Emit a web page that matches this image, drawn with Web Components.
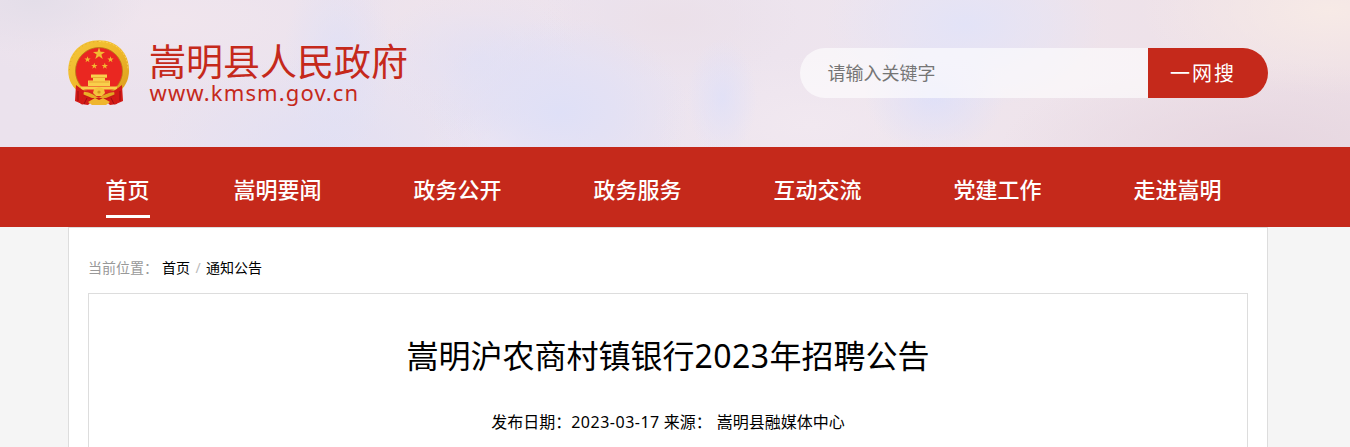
<!DOCTYPE html>
<html lang="zh-CN">
<head>
<meta charset="utf-8">
<title>嵩明沪农商村镇银行2023年招聘公告</title>
<style>
html,body{margin:0;height:447px;overflow:hidden;background:#f5f5f5}
body{font-family:"Noto Sans","Noto Sans CJK SC",sans-serif;color:#000}
</style>
</head>
<body>
<gov-page></gov-page>
<script>
const define=(name,html)=>customElements.define(name,class extends HTMLElement{
  constructor(){super();this.attachShadow({mode:'open'}).innerHTML=html;}
});

define('gov-emblem',`<style>:host{display:block;width:62px;height:66px}svg{display:block}</style>
<svg width="62" height="66" viewBox="0 0 62 66">
<defs><linearGradient id="g" x1="0" y1="0" x2="1" y2="1"><stop offset="0" stop-color="#f4c63c"/><stop offset=".5" stop-color="#efb92a"/><stop offset="1" stop-color="#d99a1c"/></linearGradient>
<path id="s" d="M0-5 1.2-1.6 4.8-1.5 1.9.6 3 4.1 0 2-3 4.1-1.9.6-4.8-1.5-1.2-1.6Z"/></defs>
<path d="M8 45 L8 60 L14 64.5 L23 61 L31 65 L39 61 L47 64.5 L54 60 L54 45Z" fill="#c81a16"/>
<path d="M31 .3C49 .3 61 13 61 30.5 61 41 56 48 50 53L38 58H24L12 53C5 48 .2 41 .2 30.5.2 13 13 .3 31 .3Z" fill="url(#g)"/>
<path d="M31 1.5C48 1.5 60 13 60 30" fill="none" stroke="#ffd95b" stroke-width=".8" stroke-dasharray="2 1.5"/>
<path d="M1.5 30C2 13 14 1.5 31 1.5" fill="none" stroke="#d99d24" stroke-width=".7" stroke-dasharray="1 3"/>
<circle cx="31" cy="31" r="23.5" fill="#ea2721" stroke="#b97b16" stroke-width=".8"/>
<g fill="#f2bb32"><use href="#s" transform="translate(31 13.8)scale(1.25)"/><use href="#s" transform="translate(19.5 19.5)scale(.65)"/><use href="#s" transform="translate(42.5 19.5)scale(.65)"/><use href="#s" transform="translate(26.3 26)scale(.65)"/><use href="#s" transform="translate(36.8 26)scale(.65)"/></g>
<g fill="#f9cf4c"><path d="M23 34.5H39V38H23Z"/><path d="M25 38H37V41H25Z"/><path d="M20 40.5H42V46H20Z"/><path d="M13 46.5H49V49.5H13Z"/></g>
<path d="M21 42H41M23 37.5H39" stroke="#db8f20" stroke-width=".6"/>
<path d="M14 51Q21 50.5 26 54T31 57T36 54T48 51" fill="none" stroke="#da2720" stroke-width="1.6"/>
<path d="M8 45 16 51 14 64 7 61ZM54 45 46 51 48 64 55 61Z" fill="#d31b17"/>
<path d="M15 56 25 60 20 65 13 64ZM47 56 37 60 42 65 49 64Z" fill="#d31b17"/>
<path d="M10 51V61M52 51V61M19 58 16 64M43 58 46 64" stroke="#9f0e12" stroke-width="1"/>
<path d="M26 49 31 47 36 49 37 53 34 56H28L25 53Z" fill="#f4c33c"/><circle cx="31" cy="52" r="1.6" fill="#d5961d"/><path d="M20 62 27 58 31 60 35 58 42 62 38 65H24Z" fill="#efb52e"/>
</svg>`);

define('gov-brand',`<style>
:host{display:flex;color:#c5291b;margin-top:40px}
.words{margin-left:19px}
.name{font:400 37px/41px "Noto Sans CJK SC",sans-serif;white-space:nowrap}
.url{font:400 22px/22px "Noto Sans",sans-serif;letter-spacing:1.12px;padding-left:.5px}
</style><gov-emblem></gov-emblem><div class="words"><div class="name"><slot name="name"></slot></div><div class="url"><slot name="url"></slot></div></div>`);

define('gov-search',`<style>
:host{display:flex;width:468px;height:50px;margin-top:48px;border-radius:25px;overflow:hidden;font-family:"Noto Sans CJK SC",sans-serif}
.field{flex:1;background:rgba(255,255,255,.6);color:#757575;font-size:18px;line-height:49px;padding-left:27.5px}
.go{box-sizing:border-box;width:120px;background:#c5291b;color:#fff;font-size:20px;line-height:49px;letter-spacing:2px;padding-left:22px}
</style><div class="field">请输入关键字</div><div class="go">一网搜</div>`);

define('gov-header',`<style>
:host{display:block;height:147px;background:
radial-gradient(ellipse 110px 55px at 35px 0,#e4dee9 0,#e4dee900 100%),
radial-gradient(ellipse 55px 95px at 338px 60px,#dfe0f6cc 0,#dfe0f600 100%),
radial-gradient(ellipse 130px 95px at 560px 112px,#dfe0f7 0,#dfe0f799 45%,#dfe0f700 100%),
radial-gradient(ellipse 100px 75px at 480px 60px,#e2e0f4cc 0,#e2e0f400 100%),
radial-gradient(ellipse 35px 60px at 722px 98px,#dfe0f8cc 0,#dfe0f800 100%),
radial-gradient(ellipse 140px 85px at 965px 25px,#e3e3f7 0,#e3e3f788 50%,#e3e3f700 100%),
radial-gradient(ellipse 70px 60px at 935px 95px,#dfe0f8 0,#dfe0f800 100%),
radial-gradient(ellipse 170px 90px at 320px 145px,#e2e0f3 0,#e2e0f300 100%),
radial-gradient(ellipse 90px 40px at 510px 147px,#f0e7f1 0,#f0e7f100 100%),
radial-gradient(ellipse 190px 85px at 1330px 10px,#f7eae6 0,#f7eae600 100%),
radial-gradient(ellipse 260px 85px at 1260px 147px,#e6d6e0 0,#e6d6e000 100%),
radial-gradient(ellipse 160px 70px at 810px 125px,#f1e8f0 0,#f1e8f000 100%),
radial-gradient(ellipse 130px 60px at 670px 20px,#ebe0e9 0,#ebe0e900 100%),
radial-gradient(ellipse 140px 60px at 470px 10px,#f0e4eb 0,#f0e4eb00 100%),
radial-gradient(ellipse 220px 75px at 170px 20px,#f0e5ed 0,#f0e5ed00 100%),
linear-gradient(90deg,#ebe2ed,#ebe3ef 45%,#efe5ed 70%,#eddfe6)}
.inner{display:flex;justify-content:space-between;width:1200px;margin-left:68px}
</style><div class="inner"><gov-brand><span slot="name">嵩明县人民政府</span><span slot="url">www.kmsm.gov.cn</span></gov-brand><gov-search></gov-search></div>`);

define('gov-nav-item',`<style>
:host{display:flex;justify-content:center;width:180px;color:#fff;font:500 22px/32px "Noto Sans CJK SC",sans-serif}
:host([active]){width:120px}
span{height:43px;margin-top:25px;border-bottom:3px solid transparent}
:host([active]) span{border-color:#fff}
</style><span><slot></slot></span>`);

define('gov-nav',`<style>
:host{display:block;height:80px;background:#c5291b}
nav{display:flex;width:1200px;margin-left:68px}
gov-nav-item{text-indent:-1px}
</style><nav><gov-nav-item active>首页</gov-nav-item><gov-nav-item>嵩明要闻</gov-nav-item><gov-nav-item>政务公开</gov-nav-item><gov-nav-item>政务服务</gov-nav-item><gov-nav-item>互动交流</gov-nav-item><gov-nav-item>党建工作</gov-nav-item><gov-nav-item>走进嵩明</gov-nav-item></nav>`);

define('gov-crumbs',`<style>
:host{display:flex;height:65px;font-size:14px;line-height:80px;color:#999;white-space:nowrap}
.home{margin-left:4px}i{font-style:normal;color:#bbb;width:16px;text-align:center}b{font-weight:400;color:#000}
</style><span>当前位置：</span><b class="home">首页</b><i>/</i><b>通知公告</b>`);

define('gov-article',`<style>
:host{display:block;border:1px solid #ddd;border-bottom:0;text-align:center;background:#fff}
h1{margin:38px 0 0;font-weight:400;font-size:32px;line-height:48px}
h1 span{letter-spacing:.5px}
.meta{display:flex;justify-content:center;margin-top:30px;font-size:16px;line-height:24px}
.date{letter-spacing:.5px;margin-right:4px}.src{margin-left:5px}
</style><h1>嵩明沪农商村镇银行<span>2023</span>年招聘公告</h1><div class="meta"><span>发布日期：</span><span class="date">2023-03-17</span><span>来源：</span><span class="src">嵩明县融媒体中心</span></div>`);

define('gov-page',`<style>
:host{display:block}
main{box-sizing:border-box;width:1200px;height:220px;margin-left:68px;padding:0 19px;border:1px solid #ddd;border-bottom:0;background:#fff;display:flex;flex-direction:column}
gov-article{flex:1}
</style><gov-header></gov-header><gov-nav></gov-nav><main><gov-crumbs></gov-crumbs><gov-article></gov-article></main>`);
</script>
</body>
</html>
